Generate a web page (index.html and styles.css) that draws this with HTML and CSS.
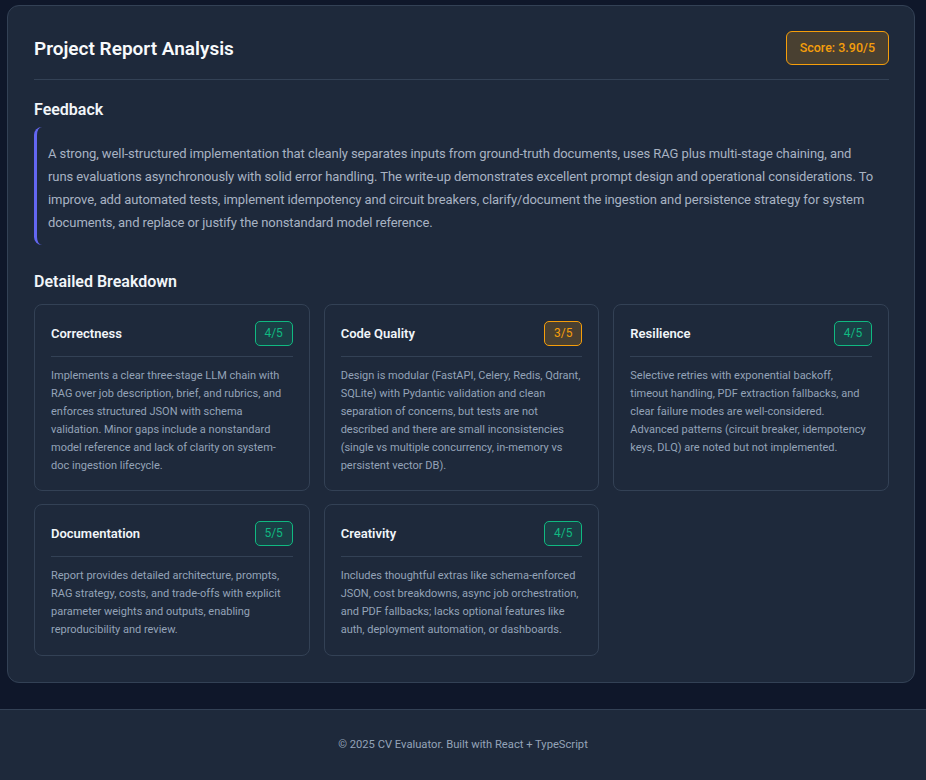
FILE: index.html
```html
<!DOCTYPE html>
<html lang="en">
<head>
<meta charset="utf-8">
<title>Project Report Analysis</title>
<link rel="stylesheet" href="styles.css">
</head>
<body>
<main class="page">
  <section class="report">
    <header class="report-head">
      <h1 class="report-title">Project Report Analysis</h1>
      <span class="score">Score: 3.90/5</span>
    </header>

    <h2 class="section-title">Feedback</h2>
    <blockquote class="feedback">A strong, well-structured implementation that cleanly separates inputs from ground-truth documents, uses RAG plus multi-stage chaining, and runs evaluations asynchronously with solid error handling. The write-up demonstrates excellent prompt design and operational considerations. To improve, add automated tests, implement idempotency and circuit breakers, clarify/document the ingestion and persistence strategy for system documents, and replace or justify the nonstandard model reference.</blockquote>

    <h2 class="section-title section-title--breakdown">Detailed Breakdown</h2>
    <div class="grid">
      <article class="crit">
        <div class="crit-head">
          <h3 class="crit-name">Correctness</h3>
          <span class="pill pill--good">4/5</span>
        </div>
        <p class="crit-text">Implements a clear three-stage LLM chain with RAG over job description, brief, and rubrics, and enforces structured JSON with schema validation. Minor gaps include a nonstandard model reference and lack of clarity on system-doc ingestion lifecycle.</p>
      </article>
      <article class="crit">
        <div class="crit-head">
          <h3 class="crit-name">Code Quality</h3>
          <span class="pill pill--mid">3/5</span>
        </div>
        <p class="crit-text">Design is modular (FastAPI, Celery, Redis, Qdrant, SQLite) with Pydantic validation and clean separation of concerns, but tests are not described and there are small inconsistencies (single vs multiple concurrency, in-memory vs persistent vector DB).</p>
      </article>
      <article class="crit">
        <div class="crit-head">
          <h3 class="crit-name">Resilience</h3>
          <span class="pill pill--good">4/5</span>
        </div>
        <p class="crit-text">Selective retries with exponential backoff, timeout handling, PDF extraction fallbacks, and clear failure modes are well-considered. Advanced patterns (circuit breaker, idempotency keys, DLQ) are noted but not implemented.</p>
      </article>
      <article class="crit">
        <div class="crit-head">
          <h3 class="crit-name">Documentation</h3>
          <span class="pill pill--good">5/5</span>
        </div>
        <p class="crit-text">Report provides detailed architecture, prompts, RAG strategy, costs, and trade-offs with explicit parameter weights and outputs, enabling reproducibility and review.</p>
      </article>
      <article class="crit">
        <div class="crit-head">
          <h3 class="crit-name">Creativity</h3>
          <span class="pill pill--good">4/5</span>
        </div>
        <p class="crit-text">Includes thoughtful extras like schema-enforced JSON, cost breakdowns, async job orchestration, and PDF fallbacks; lacks optional features like auth, deployment automation, or dashboards.</p>
      </article>
    </div>
  </section>
</main>
<footer class="footer">© 2025 CV Evaluator. Built with React + TypeScript</footer>
</body>
</html>
```

FILE: styles.css
```css
* { box-sizing: border-box; }

html, body {
  margin: 0;
  padding: 0;
  background: #0f172a;
  font-family: Roboto, "Noto Sans", "Liberation Sans", sans-serif;
  color: #e2e8f0;
}

.page {
  padding: 5px 11px 26px 7px;
}

.report {
  background: #1e293b;
  border: 1px solid #334155;
  border-radius: 12px;
  padding: 25px 25px 26px 26px;
}

.report-head {
  display: flex;
  justify-content: space-between;
  align-items: center;
  padding-bottom: 14px;
  border-bottom: 1px solid #334155;
}

.report-title {
  margin: 0;
  font-size: 19px;
  font-weight: 600;
  color: #f8fafc;
}

.score {
  display: inline-block;
  height: 34px;
  line-height: 32px;
  padding: 0 13px;
  border: 1px solid #f59e0b;
  border-radius: 6px;
  background: rgba(245, 158, 11, 0.2);
  color: #f59e0b;
  font-size: 12.5px;
  font-weight: 500;
}

.section-title {
  margin: 18px 0 5px;
  font-size: 16px;
  line-height: 24px;
  font-weight: 600;
  color: #f1f5f9;
}

.section-title--breakdown {
  margin: 25px 0 10px;
}

.feedback {
  margin: 0;
  padding: 15px 14px 11px 11px;
  border-left: 3px solid #6366f1;
  border-radius: 8px 0 0 8px;
  font-size: 13px;
  letter-spacing: -0.08px;
  line-height: 23px;
  color: #a8b3c3;
}

.grid {
  display: grid;
  grid-template-columns: repeat(3, 1fr);
  gap: 13px 14px;
  align-items: start;
}

.crit {
  border: 1px solid #334155;
  border-radius: 8px;
  padding: 16px 16px 15px;
  min-height: 152px;
}

.grid .crit:nth-child(-n+3) {
  min-height: 187px;
}

.crit-head {
  display: flex;
  justify-content: space-between;
  align-items: center;
  padding-bottom: 10px;
  border-bottom: 1px solid #334155;
}

.crit-name {
  margin: 0;
  font-size: 13px;
  font-weight: 600;
  color: #f1f5f9;
}

.pill {
  display: inline-block;
  width: 38px;
  height: 25px;
  line-height: 23px;
  text-align: center;
  border-radius: 5px;
  font-size: 12px;
}

.pill--good {
  border: 1px solid #10b981;
  background: rgba(16, 185, 129, 0.15);
  color: #10b981;
}

.pill--mid {
  border: 1px solid #f59e0b;
  background: rgba(245, 158, 11, 0.2);
  color: #f59e0b;
}

.crit-text {
  margin: 10px 0 0;
  font-size: 11px;
  line-height: 18px;
  color: #94a3b8;
}

.footer {
  background: #1e293b;
  border-top: 1px solid #334155;
  height: 71px;
  display: flex;
  align-items: center;
  justify-content: center;
  padding-bottom: 2px;
  font-size: 11.2px;
  color: #94a3b8;
}
```
